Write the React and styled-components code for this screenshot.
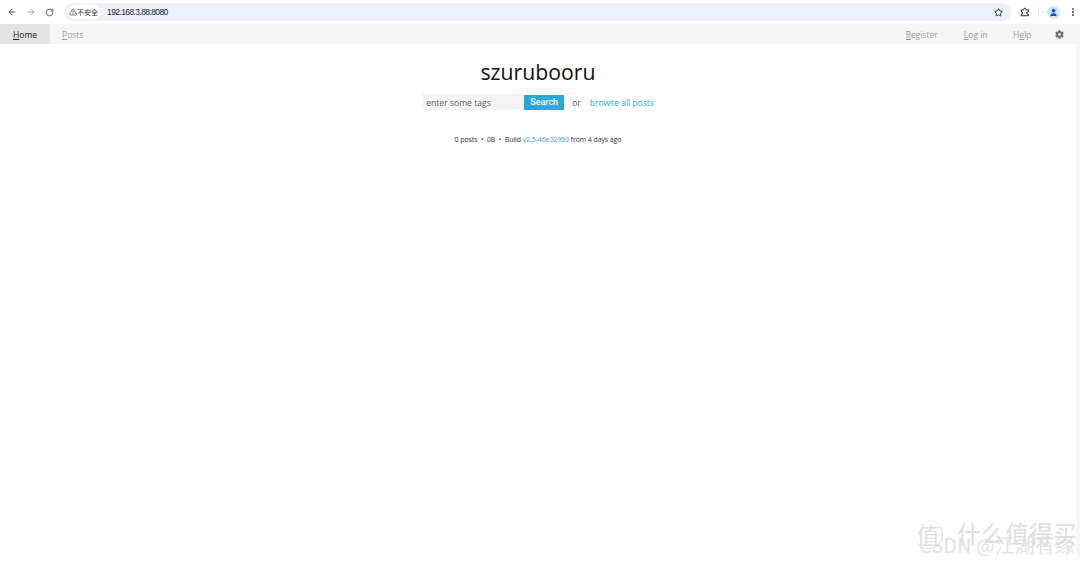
import React from 'react';
import styled, { createGlobalStyle } from 'styled-components';
import { ArrowLeft, ArrowRight, RotateCw, TriangleAlert, Star, User, EllipsisVertical } from 'lucide-react';
import { FaCog } from 'react-icons/fa';

const GlobalStyle = createGlobalStyle`
	html, body {
		margin: 0;
		padding: 0;
		height: 100%;
		overflow: hidden;
		background: #fff;
	}
	#root {
		height: 100%;
	}
`;

const Page = styled.div`
	position: relative;
	display: flex;
	flex-direction: column;
	width: 1080px;
	height: 561px;
	font-family: 'Open Sans', 'Noto Sans', sans-serif;
	color: #111;
	overflow: hidden;
`;

const BrowserBar = styled.div`
	display: flex;
	align-items: center;
	height: 25px;
	padding: 0 2px 1px 2px;
	box-sizing: border-box;
	background: #fff;
`;

const NavIcon = styled.span`
	display: flex;
	justify-content: center;
	width: 19px;
	color: ${(p) => (p.$dim ? '#8a8f96' : '#3c4043')};
`;

const Omnibox = styled.div`
	display: flex;
	align-items: center;
	flex: 1;
	height: 18px;
	margin: 0 9px 0 5px;
	padding: 0 8.5px 0 3px;
	background: #edf2fa;
	border-radius: 9px;
`;

const Security = styled.div`
	display: flex;
	align-items: center;
	height: 14px;
	padding: 0 3px 0 2px;
	background: #fff;
	border-radius: 7px;
	font-family: 'Noto Sans CJK SC', sans-serif;
	font-size: 7px;
	color: #333;
`;

const Address = styled.span`
	flex: 1;
	margin-left: 6px;
	font-family: 'Liberation Sans', sans-serif;
	font-size: 8.5px;
	letter-spacing: -0.6px;
	color: #222;
`;

const Tools = styled.div`
	display: flex;
	align-items: center;
	color: #2b2d30;
`;

const Divider = styled.span`
	width: 1px;
	height: 12px;
	margin: 0 8px;
	background: #e3e8f0;
`;

const Avatar = styled.span`
	display: flex;
	align-items: center;
	justify-content: center;
	width: 13px;
	height: 13px;
	margin-right: 8px;
	border-radius: 50%;
	background: #d3e3fd;
	color: #0b57d0;
`;

const TopNav = styled.nav`
	display: flex;
	justify-content: space-between;
	height: 20px;
	margin-top: -1px;
	background: #f5f5f5;
	font-size: 8.5px;
`;

const NavGroup = styled.div`
	display: flex;
	align-items: stretch;
`;

const NavItem = styled.a`
	display: flex;
	align-items: center;
	padding: 1px ${(p) => p.$pad || 12.5}px 0;
	background: ${(p) => (p.$active ? '#e4e4e4' : 'transparent')};
	color: ${(p) => (p.$active ? '#222' : '#9a9a9a')};
	u {
		text-underline-offset: 1px;
	}
`;

const GearItem = styled.span`
	display: flex;
	align-items: center;
	padding: 0 16px 0 11px;
	color: #6f6f6f;
`;

const Main = styled.main`
	display: flex;
	flex-direction: column;
	align-items: center;
	padding-right: 4px;
`;

const Title = styled.h1`
	margin: 13px 0 0;
	font-size: 21.25px;
	line-height: 30px;
	font-weight: 400;
	color: #111;
`;

const SearchRow = styled.div`
	display: flex;
	align-items: center;
	margin-top: 7px;
	height: 16px;
	font-size: 8.5px;
`;

const TagInput = styled.input`
	width: 101px;
	height: 16px;
	margin-right: 1px;
	padding: 1px 4px 0;
	box-sizing: border-box;
	border: 0;
	outline: 0;
	background: #f5f5f5;
	font-family: inherit;
	font-size: 8.6px;
	color: #444;
	&::placeholder {
		color: #5c5c5c;
		opacity: 1;
	}
`;

const SearchButton = styled.button`
	width: 40px;
	height: 15px;
	padding: 0;
	border: 0;
	background: #24aadd;
	font-family: 'Roboto', sans-serif;
	font-weight: 500;
	font-size: 9px;
	color: #fff;
`;

const Or = styled.span`
	margin: 0 9px 0 8px;
	color: #555;
`;

const BlueLink = styled.a`
	color: #24aadd;
`;

const Stats = styled.div`
	display: flex;
	gap: 3.5px;
	margin-top: 24px;
	font-size: 7px;
	line-height: 12px;
	letter-spacing: -0.1px;
	color: #333;
`;

const Scrollbar = styled.div`
	position: absolute;
	top: 24px;
	right: 0;
	bottom: 0;
	width: 4px;
	background: #f6f6f6;
`;

const Watermark = styled.div`
	position: absolute;
	right: 0;
	bottom: 0;
	width: 180px;
	height: 51px;
	color: #dedede;
	pointer-events: none;
`;

const MarkBrand = styled.div`
	position: absolute;
	left: 57px;
	top: 8px;
	font-family: 'Noto Sans CJK SC', sans-serif;
	font-size: 24px;
	line-height: 30px;
	white-space: nowrap;
`;

const MarkBadge = styled.div`
	position: absolute;
	left: 14px;
	top: 10px;
	width: 28px;
	height: 28px;
	border-right: 1px solid #dedede;
	border-bottom: 1px solid #dedede;
	border-radius: 50%;
	background: #fff;
	font-family: 'Noto Sans CJK SC', sans-serif;
	font-size: 23px;
	line-height: 28px;
	text-align: center;
`;

const MarkSource = styled.div`
	position: absolute;
	left: 19px;
	top: 23px;
	font-family: 'Noto Sans CJK SC', sans-serif;
	font-size: 20px;
	line-height: 24px;
	white-space: nowrap;
	color: #e2e2e2;
`;

const ExtensionIcon = () => (
	<svg width='10' height='10' viewBox='0 0 24 24' fill='none' stroke='currentColor' strokeWidth='2.4' strokeLinejoin='round'>
		<path d='M3 7h6V5.5a2.5 2.5 0 0 1 5 0V7h6v5h-1.5a2.5 2.5 0 0 0 0 5H20v4H3v-4h1.5a2.5 2.5 0 0 0 0-5H3z' />
	</svg>
);

const App = () => (
	<Page>
		<GlobalStyle />
		<BrowserBar>
			<NavIcon><ArrowLeft size={10} strokeWidth={2} /></NavIcon>
			<NavIcon $dim><ArrowRight size={10} strokeWidth={2} /></NavIcon>
			<NavIcon><RotateCw size={9} strokeWidth={2} /></NavIcon>
			<Omnibox>
				<Security>
					<TriangleAlert size={8} strokeWidth={2} />
					不安全
				</Security>
				<Address>192.168.3.88:8080</Address>
				<Star size={9} strokeWidth={2.6} color='#2b2d30' />
			</Omnibox>
			<Tools>
				<ExtensionIcon />
				<Divider />
				<Avatar><User size={9} fill='currentColor' strokeWidth={2} /></Avatar>
				<EllipsisVertical size={10} strokeWidth={2.5} />
			</Tools>
		</BrowserBar>
		<TopNav>
			<NavGroup>
				<NavItem $active $pad={13}><span><u>H</u>ome</span></NavItem>
				<NavItem $pad={12}><span><u>P</u>osts</span></NavItem>
			</NavGroup>
			<NavGroup>
				<NavItem $pad={13}><span><u>R</u>egister</span></NavItem>
				<NavItem $pad={13}><span><u>L</u>og in</span></NavItem>
				<NavItem $pad={12.5}><span>H<u>e</u>lp</span></NavItem>
				<GearItem><FaCog size={9} /></GearItem>
			</NavGroup>
		</TopNav>
		<Main>
			<Title>szurubooru</Title>
			<SearchRow>
				<TagInput placeholder='enter some tags' />
				<SearchButton>Search</SearchButton>
				<Or>or</Or>
				<BlueLink>browse all posts</BlueLink>
			</SearchRow>
			<Stats>
				<span>0 posts</span>
				<span>•</span>
				<span>0B</span>
				<span>•</span>
				<span>Build <BlueLink>v2.5-46e32950</BlueLink> from 4 days ago</span>
			</Stats>
		</Main>
		<Scrollbar />
		<Watermark>
			<MarkSource>CSDN @江湖有缘</MarkSource>
			<MarkBadge>值</MarkBadge>
			<MarkBrand>什么值得买</MarkBrand>
		</Watermark>
	</Page>
);

export default App;
